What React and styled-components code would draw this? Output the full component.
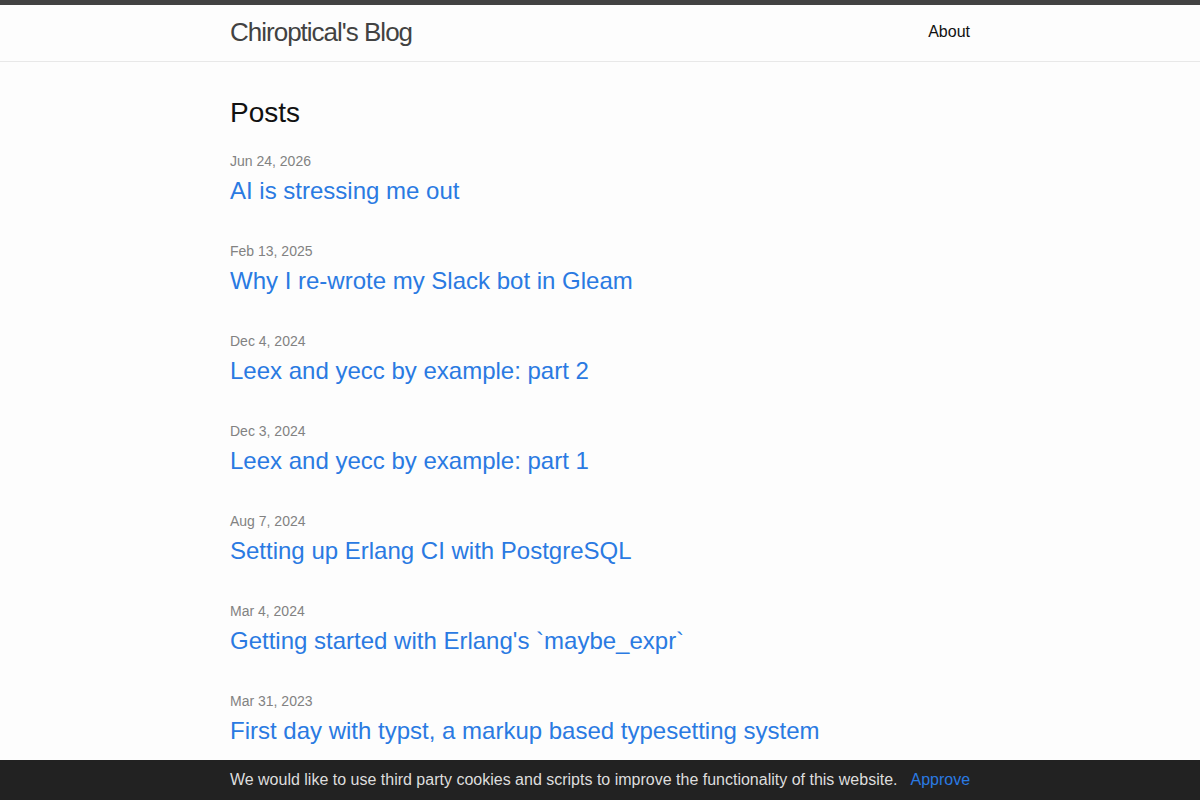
import React from "react";
import styled, { createGlobalStyle } from "styled-components";

const Global = createGlobalStyle`
  html, body { margin: 0; padding: 0; }
  body {
    font-family: "Liberation Sans", Helvetica, Arial, sans-serif;
    font-size: 16px;
    line-height: 1.5;
    color: #111;
    background: #fdfdfd;
  }
`;

const Header = styled.header`
  border-top: 5px solid #424242;
  border-bottom: 1px solid #e8e8e8;
  min-height: 55.95px;
`;

const Wrapper = styled.div`
  max-width: 740px;
  margin: 0 auto;
  padding: 0 30px;
`;

const HeaderRow = styled(Wrapper)`
  display: flex;
  justify-content: space-between;
  align-items: center;
`;

const SiteTitle = styled.a`
  font-size: 26px;
  font-weight: 300;
  line-height: 54px;
  letter-spacing: -1px;
  color: #424242;
  text-decoration: none;
`;

const NavLink = styled.a`
  color: #111;
  line-height: 54px;
  text-decoration: none;
`;

const Main = styled.main`
  padding: 30px 0 40px;
`;

const Heading = styled.h2`
  font-size: 28px;
  font-weight: 400;
  line-height: 42px;
  margin: 0 0 15px;
`;

const PostList = styled.ul`
  list-style: none;
  margin: 0;
  padding: 0;
`;

const PostItem = styled.li`
  margin-bottom: 30px;
`;

const Meta = styled.div`
  font-size: 14px;
  line-height: 24px;
  color: #828282;
`;

const PostTitle = styled.h3`
  margin: 0;
  font-size: 24px;
  font-weight: 400;
  line-height: 36px;
`;

const PostLink = styled.a`
  color: #2a7ae2;
  text-decoration: none;
`;

const CookieBar = styled.div`
  position: fixed;
  left: 0;
  right: 0;
  bottom: 0;
  height: 40px;
  background: #222;
  color: #ddd;
  display: flex;
  align-items: center;
  justify-content: center;
  gap: 13px;
  font-size: 16px;
`;

const Approve = styled.a`
  color: #2a7ae2;
  text-decoration: none;
  cursor: pointer;
`;

const posts = [
  ["Jun 24, 2026", "AI is stressing me out"],
  ["Feb 13, 2025", "Why I re-wrote my Slack bot in Gleam"],
  ["Dec 4, 2024", "Leex and yecc by example: part 2"],
  ["Dec 3, 2024", "Leex and yecc by example: part 1"],
  ["Aug 7, 2024", "Setting up Erlang CI with PostgreSQL"],
  ["Mar 4, 2024", "Getting started with Erlang's `maybe_expr`"],
  ["Mar 31, 2023", "First day with typst, a markup based typesetting system"],
];

export default function App() {
  return (
    <>
      <Global />
      <Header>
        <HeaderRow>
          <SiteTitle href="#">Chiroptical's Blog</SiteTitle>
          <NavLink href="#">About</NavLink>
        </HeaderRow>
      </Header>
      <Main>
        <Wrapper>
          <Heading>Posts</Heading>
          <PostList>
            {posts.map(([date, title]) => (
              <PostItem key={title}>
                <Meta>{date}</Meta>
                <PostTitle>
                  <PostLink href="#">{title}</PostLink>
                </PostTitle>
              </PostItem>
            ))}
          </PostList>
        </Wrapper>
      </Main>
      <CookieBar>
        <span>We would like to use third party cookies and scripts to improve the functionality of this website.</span>
        <Approve>Approve</Approve>
      </CookieBar>
    </>
  );
}
